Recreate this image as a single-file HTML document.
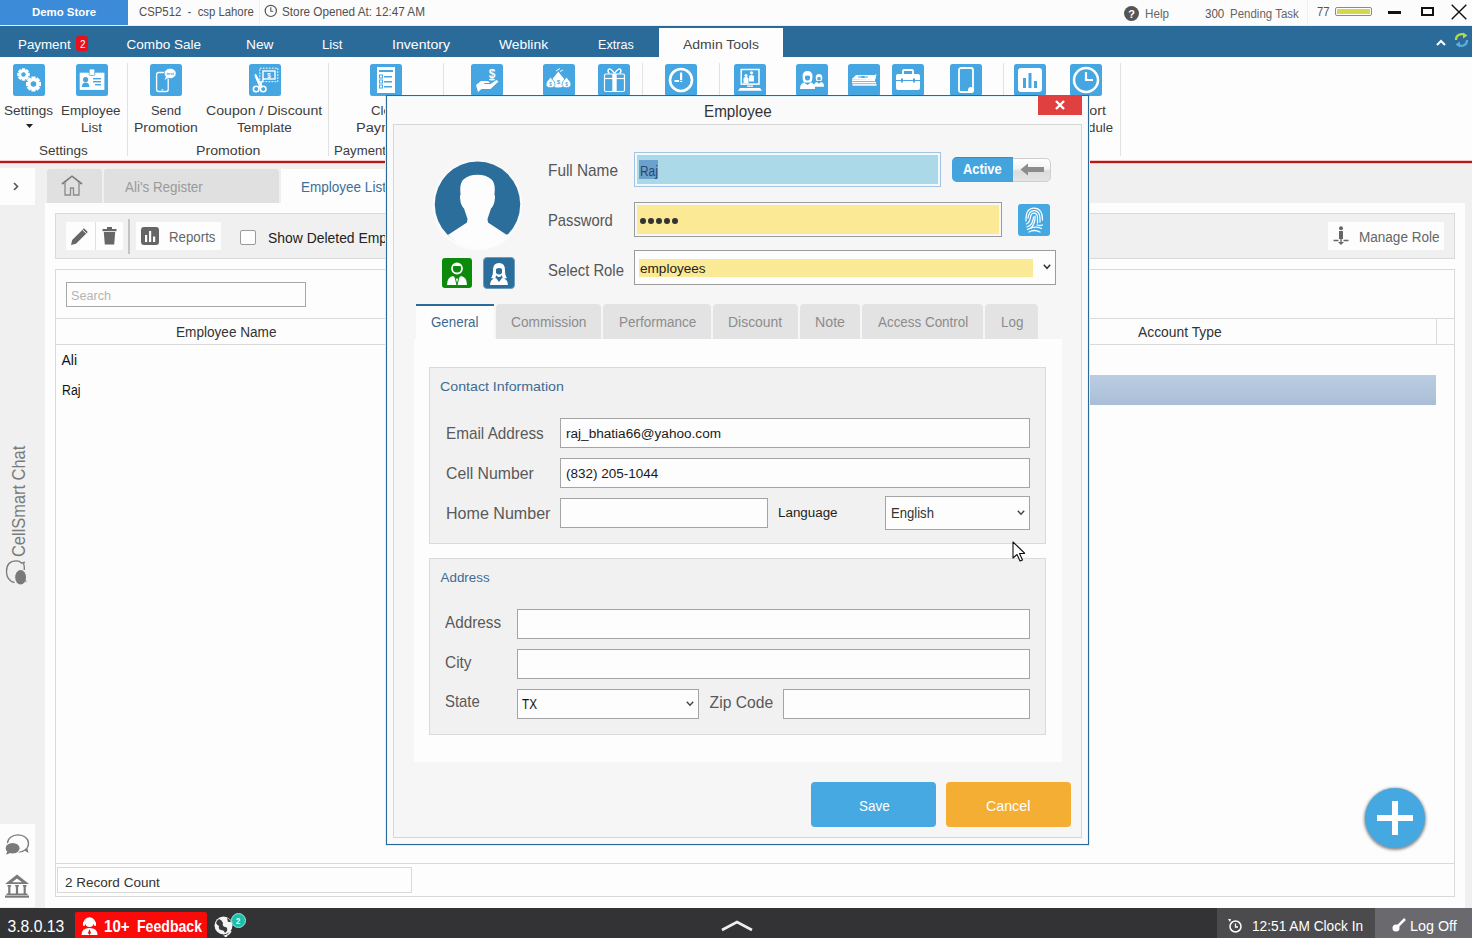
<!DOCTYPE html>
<html><head><meta charset="utf-8"><title>Employee</title>
<style>
html,body{margin:0;padding:0;}
body{width:1472px;height:938px;overflow:hidden;position:relative;background:#f0f0f0;font-family:"Liberation Sans",sans-serif;}
.r{position:absolute;box-sizing:border-box;}
.t{position:absolute;white-space:pre;line-height:1;transform-origin:0 0;font-family:"Liberation Sans",sans-serif;}
</style></head><body>
<div class="r" style="left:0px;top:0px;width:1472px;height:26px;background:#fcfcfc;"></div>
<div class="r" style="left:0px;top:0px;width:128px;height:25px;background:#3b8bd8;"></div>
<div class="t" style="left:32.20px;top:5.85px;font-size:11.63px;color:#ffffff;transform:scaleX(0.9807);font-weight:bold;">Demo Store</div>
<div class="t" style="left:139.20px;top:5.02px;font-size:13.08px;color:#505050;transform:scaleX(0.8674);">CSP512  -  csp Lahore</div>
<div class="r" style="left:259px;top:0px;width:1px;height:25px;background:#eef0f2;"></div>
<svg class="r" style="left:264px;top:4px;" width="14" height="14" viewBox="0 0 14 14"><circle cx="6.8" cy="6.9" r="5.6" fill="none" stroke="#555" stroke-width="1.2"/><path d="M6.8 3.2v4h2.4" fill="none" stroke="#555" stroke-width="1.1"/></svg>
<div class="t" style="left:282.00px;top:5.02px;font-size:13.08px;color:#505050;transform:scaleX(0.8979);">Store Opened At: 12:47 AM</div>
<svg class="r" style="left:1124px;top:6px;" width="15" height="15" viewBox="0 0 15 15"><circle cx="7.5" cy="7.5" r="7.5" fill="#555"/><text x="7.5" y="12" font-size="11" font-family="Liberation Sans" font-weight="bold" fill="#fff" text-anchor="middle">?</text></svg>
<div class="t" style="left:1144.70px;top:6.62px;font-size:13.08px;color:#666666;transform:scaleX(0.8917);">Help</div>
<div class="t" style="left:1205.00px;top:7.22px;font-size:13.08px;color:#555555;transform:scaleX(0.8848);">300</div>
<div class="t" style="left:1229.60px;top:6.62px;font-size:13.08px;color:#666666;transform:scaleX(0.8784);">Pending Task</div>
<div class="r" style="left:1307px;top:0px;width:1px;height:25px;background:#eef0f2;"></div>
<div class="t" style="left:1317.00px;top:5.62px;font-size:12.50px;color:#555555;transform:scaleX(0.8989);">77</div>
<div class="r" style="left:1335px;top:7px;width:37px;height:9px;border:1px solid #8a8a8a;border-radius:2px;background:#fff;"></div>
<div class="r" style="left:1337px;top:9px;width:33px;height:5px;background:#d4d84a;"></div>
<div class="r" style="left:1388px;top:11px;width:13px;height:3px;background:#111;"></div>
<div class="r" style="left:1421px;top:7px;width:13px;height:9px;border:2px solid #111;"></div>
<svg class="r" style="left:1451px;top:4px;" width="16" height="16" viewBox="0 0 16 16"><path d="M0.7 0.7L15.3 15.3M15.3 0.7L0.7 15.3" stroke="#111" stroke-width="1.4"/></svg>
<div class="r" style="left:0px;top:25px;width:1472px;height:1px;background:#e8eef3;"></div>
<div class="r" style="left:0px;top:26px;width:1472px;height:31px;background:#2b6b99;"></div>
<div class="t" style="left:18.30px;top:37.65px;font-size:13.52px;color:#ffffff;transform:scaleX(0.9876);">Payment</div>
<div class="r" style="left:76px;top:36px;width:12px;height:15px;background:#e8101a;border-radius:3px;"></div>
<div class="t" style="left:79.50px;top:38.77px;font-size:10.90px;color:#ffffff;transform:scaleX(0.9091);">2</div>
<div class="t" style="left:126.60px;top:37.65px;font-size:13.52px;color:#ffffff;">Combo Sale</div>
<div class="t" style="left:245.50px;top:37.65px;font-size:13.52px;color:#ffffff;transform:scaleX(1.0159);">New</div>
<div class="t" style="left:322.00px;top:37.65px;font-size:13.52px;color:#ffffff;transform:scaleX(0.9753);">List</div>
<div class="t" style="left:392.00px;top:37.65px;font-size:13.52px;color:#ffffff;transform:scaleX(1.0433);">Inventory</div>
<div class="t" style="left:499.30px;top:37.65px;font-size:13.52px;color:#ffffff;transform:scaleX(1.0261);">Weblink</div>
<div class="t" style="left:598.30px;top:37.65px;font-size:13.52px;color:#ffffff;transform:scaleX(0.9316);">Extras</div>
<div class="r" style="left:659px;top:28px;width:124px;height:29px;background:#fdfdfd;"></div>
<div class="t" style="left:683.00px;top:37.65px;font-size:13.52px;color:#454545;transform:scaleX(1.0354);">Admin Tools</div>
<svg class="r" style="left:1436px;top:39px;" width="10" height="7" viewBox="0 0 10 7"><path d="M1 6L5 2L9 6" fill="none" stroke="#fff" stroke-width="2"/></svg>
<svg class="r" style="left:1454px;top:32px;" width="15" height="16" viewBox="0 0 15 16"><path d="M2 8A5.5 5.5 0 0 1 11 3.5" fill="none" stroke="#b8d84a" stroke-width="2.2"/><path d="M9 0.5L13.5 3.5L9 6.5Z" fill="#b8d84a"/><path d="M13 8A5.5 5.5 0 0 1 4 12.5" fill="none" stroke="#5aaee0" stroke-width="2.2"/><path d="M6 9.5L1.5 12.5L6 15.5Z" fill="#5aaee0"/></svg>
<div class="r" style="left:0px;top:57px;width:1472px;height:103px;background:#fdfdfd;"></div>
<svg class="r" style="left:13px;top:64px;" width="32" height="32" viewBox="0 0 32 32"><rect x="0" y="0" width="32" height="32" rx="2.5" fill="#45a6e1"/><g transform="translate(10.5,10.5)"><rect x="-1.74" y="-6.20" width="3.47" height="12.40" fill="#fff" transform="rotate(0)"/><rect x="-1.74" y="-6.20" width="3.47" height="12.40" fill="#fff" transform="rotate(45)"/><rect x="-1.74" y="-6.20" width="3.47" height="12.40" fill="#fff" transform="rotate(90)"/><rect x="-1.74" y="-6.20" width="3.47" height="12.40" fill="#fff" transform="rotate(135)"/><circle r="4.84" fill="#fff"/><circle r="2.20" fill="#45a6e1"/></g><g transform="translate(20.5,20)"><rect x="-2.10" y="-7.50" width="4.20" height="15.00" fill="#fff" transform="rotate(0)"/><rect x="-2.10" y="-7.50" width="4.20" height="15.00" fill="#fff" transform="rotate(45)"/><rect x="-2.10" y="-7.50" width="4.20" height="15.00" fill="#fff" transform="rotate(90)"/><rect x="-2.10" y="-7.50" width="4.20" height="15.00" fill="#fff" transform="rotate(135)"/><circle r="5.85" fill="#fff"/><circle r="2.80" fill="#45a6e1"/></g></svg>
<svg class="r" style="left:76px;top:64px;" width="32" height="32" viewBox="0 0 32 32"><rect x="0" y="0" width="32" height="32" rx="2.5" fill="#45a6e1"/><rect x="3.7" y="8.7" width="24.7" height="17.2" fill="#fff"/><rect x="13.2" y="5" width="5.6" height="6.5" rx="1" fill="#fff" stroke="#45a6e1" stroke-width="0.8"/><circle cx="9.6" cy="15.5" r="2.6" fill="#45a6e1"/><path d="M5.8 23q0-4.5 3.8-4.5q3.8 0 3.8 4.5z" fill="#45a6e1"/><rect x="17" y="14" width="8" height="1.4" fill="#45a6e1"/><rect x="17" y="17" width="8" height="1.4" fill="#45a6e1"/><rect x="19" y="20" width="6" height="1.4" fill="#45a6e1"/></svg>
<svg class="r" style="left:150px;top:64px;" width="32" height="32" viewBox="0 0 32 32"><rect x="0" y="0" width="32" height="32" rx="2.5" fill="#45a6e1"/><rect x="6.6" y="8.5" width="11.6" height="19" rx="2" fill="none" stroke="#fff" stroke-width="1.3"/><rect x="7.5" y="11" width="9.8" height="13" fill="none"/><circle cx="12.4" cy="25.8" r="0.8" fill="#fff"/><ellipse cx="20.2" cy="9.4" rx="6" ry="5.2" fill="#fff" stroke="#45a6e1" stroke-width="0.8"/><path d="M16 12.5l-1.5 3.5l4-2.5z" fill="#fff"/><text x="20.2" y="11" font-size="4.2" font-weight="bold" fill="#45a6e1" text-anchor="middle" font-family="Liberation Sans">text</text></svg>
<svg class="r" style="left:249px;top:64px;" width="32" height="32" viewBox="0 0 32 32"><rect x="0" y="0" width="32" height="32" rx="2.5" fill="#45a6e1"/><rect x="10.8" y="4.2" width="18" height="13.5" fill="none" stroke="#fff" stroke-width="1" stroke-dasharray="1.8 1.2"/><rect x="14" y="7" width="12" height="8" fill="none" stroke="#fff" stroke-width="1.4"/><text x="20" y="13.6" font-size="6.5" font-weight="bold" fill="#fff" text-anchor="middle" font-family="Liberation Sans">$</text><path d="M6.3 10.2L13.5 23.5M6.8 10.5l-0.5 1.5l5 11.5" stroke="#fff" stroke-width="1.5" fill="none"/><path d="M15 14L10 23.5" stroke="#fff" stroke-width="1.5"/><circle cx="7.2" cy="25" r="2.8" fill="none" stroke="#fff" stroke-width="1.6"/><circle cx="14.2" cy="25" r="2.8" fill="none" stroke="#fff" stroke-width="1.6"/></svg>
<svg class="r" style="left:370px;top:64px;" width="32" height="32" viewBox="0 0 32 32"><rect x="0" y="0" width="32" height="32" rx="2.5" fill="#45a6e1"/><rect x="7" y="3" width="18" height="26" fill="#fff"/><rect x="9" y="6" width="14" height="2" fill="#45a6e1"/><rect x="9.5" y="11" width="3" height="3" fill="none" stroke="#45a6e1" stroke-width="1"/><rect x="14" y="12" width="8" height="1.5" fill="#45a6e1"/><rect x="9.5" y="16" width="3" height="3" fill="none" stroke="#45a6e1" stroke-width="1"/><rect x="14" y="17" width="8" height="1.5" fill="#45a6e1"/><rect x="9.5" y="21" width="3" height="3" fill="none" stroke="#45a6e1" stroke-width="1"/><rect x="14" y="22" width="8" height="1.5" fill="#45a6e1"/></svg>
<svg class="r" style="left:471px;top:64px;" width="32" height="32" viewBox="0 0 32 32"><rect x="0" y="0" width="32" height="32" rx="2.5" fill="#45a6e1"/><text x="21" y="14" font-size="12" font-weight="bold" fill="#fff" text-anchor="middle" font-family="Liberation Sans">$</text><ellipse cx="21" cy="15.5" rx="3" ry="1" fill="#fff"/><path d="M5 21l5-4h7l2 2h-6l0.5 1h6l6-4l2 1.5l-8 7.5h-9l-3.5 3z" fill="#fff"/></svg>
<svg class="r" style="left:543px;top:64px;" width="32" height="32" viewBox="0 0 32 32"><rect x="0" y="0" width="32" height="32" rx="2.5" fill="#45a6e1"/><path d="M15.3 7.5l-3 4q-4 4-4 8q0 4 7 4q7 0 7-4q0-4-4-8z" fill="#fff"/><path d="M7.5 13l-1.5 2q-3 3-3 5q0 3.7 4.5 3.7q4.5 0 4.5-3.7q0-2-3-5z" fill="#fff" stroke="#45a6e1" stroke-width="0.8"/><path d="M23.5 13l-1.5 2q-3 3-3 5q0 3.7 4.5 3.7q4.5 0 4.5-3.7q0-2-3-5z" fill="#fff" stroke="#45a6e1" stroke-width="0.8"/><text x="15.3" y="20" font-size="6" font-weight="bold" fill="#45a6e1" text-anchor="middle" font-family="Liberation Sans">$</text><text x="7.5" y="21.5" font-size="4.5" font-weight="bold" fill="#45a6e1" text-anchor="middle" font-family="Liberation Sans">$</text><text x="23.5" y="21.5" font-size="4.5" font-weight="bold" fill="#45a6e1" text-anchor="middle" font-family="Liberation Sans">$</text><path d="M13 7l4-2.5M17 7.5l3-1.5" stroke="#fff" stroke-width="1"/></svg>
<svg class="r" style="left:598px;top:64px;" width="32" height="32" viewBox="0 0 32 32"><rect x="0" y="0" width="32" height="32" rx="2.5" fill="#45a6e1"/><rect x="6.5" y="10" width="20" height="17.5" rx="1.5" fill="none" stroke="#fff" stroke-width="1.2"/><path d="M6.5 14.5h20" stroke="#fff" stroke-width="1.2"/><rect x="14.3" y="10" width="4.4" height="17.5" fill="#fff"/><path d="M16.5 9.5q-4-6-6-4q-1.5 2 1 4M16.5 9.5q4-6 6-4q1.5 2-1 4" fill="none" stroke="#fff" stroke-width="1.3"/></svg>
<svg class="r" style="left:665px;top:64px;" width="32" height="32" viewBox="0 0 32 32"><rect x="0" y="0" width="32" height="32" rx="2.5" fill="#45a6e1"/><circle cx="16" cy="16" r="11" fill="none" stroke="#fff" stroke-width="2.6"/><rect x="15" y="8.5" width="2.2" height="7.5" fill="#fff"/><rect x="15" y="16.8" width="2.2" height="1.2" fill="#fff"/><rect x="9.5" y="16" width="4.6" height="2" fill="#fff"/></svg>
<svg class="r" style="left:734px;top:64px;" width="32" height="32" viewBox="0 0 32 32"><rect x="0" y="0" width="32" height="32" rx="2.5" fill="#45a6e1"/><rect x="7.2" y="5.5" width="17.8" height="14.6" fill="none" stroke="#fff" stroke-width="1.5"/><circle cx="12" cy="11.5" r="1.6" fill="#fff"/><path d="M9.5 19.5v-5q0-1.5 2.5-1.5q2.5 0 2.5 1.5v5z" fill="#fff"/><circle cx="17.5" cy="8.8" r="1.6" fill="#fff"/><path d="M15 17.5v-5q0-1.5 2.5-1.5q2.5 0 2.5 1.5v5z" fill="#fff"/><rect x="13" y="21.5" width="6" height="1.3" fill="#fff"/><path d="M6 24h20l2 2.7H4z" fill="#fff"/></svg>
<svg class="r" style="left:796px;top:64px;" width="32" height="32" viewBox="0 0 32 32"><rect x="0" y="0" width="32" height="32" rx="2.5" fill="#45a6e1"/><path d="M11.5 6.9q-5 0-5 5.5q0 4 1.5 6h7q1.5-2 1.5-6q0-5.5-5-5.5z" fill="#fff"/><path d="M9 12q2.5-1 5 0v3q-2.5 3-5 0z" fill="#45a6e1"/><path d="M4 24.9q0-5.5 4-6.5l3.5 2.5l3.5-2.5q4 1 4 6.5z" fill="#fff"/><path d="M23 10q-3.3 0-3.3 3.5q0 2 1 3.5h4.6q1-1.5 1-3.5q0-3.5-3.3-3.5z" fill="#fff"/><path d="M21.3 13.5q1.7-0.8 3.4 0v2q-1.7 2-3.4 0z" fill="#45a6e1"/><path d="M17.9 22.8q0-4 3-4.8l2.1 1.8l2.1-1.8q3 0.8 3 4.8z" fill="#fff"/></svg>
<svg class="r" style="left:848px;top:64px;" width="32" height="32" viewBox="0 0 32 32"><rect x="0" y="0" width="32" height="32" rx="2.5" fill="#45a6e1"/><path d="M4 15l4-4h20l-1 5z" fill="#fff"/><path d="M4 15h23l1-5" fill="none" stroke="#fff" stroke-width="0.8"/><rect x="4" y="15.5" width="23" height="1.6" fill="#fff"/><rect x="4" y="17.8" width="24" height="1.6" fill="#fff"/><rect x="4.5" y="20.1" width="24" height="1.6" fill="#fff"/><path d="M10 13h10" stroke="#45a6e1" stroke-width="1"/><ellipse cx="15" cy="13" rx="2" ry="1" fill="#45a6e1"/></svg>
<svg class="r" style="left:892px;top:64px;" width="32" height="32" viewBox="0 0 32 32"><rect x="0" y="0" width="32" height="32" rx="2.5" fill="#45a6e1"/><rect x="4" y="10" width="24" height="16" rx="2" fill="#fff"/><rect x="11" y="6" width="10" height="5" rx="1" fill="none" stroke="#fff" stroke-width="1.8"/><rect x="4" y="16" width="24" height="1" fill="#45a6e1"/><rect x="9" y="14.5" width="2" height="4" fill="#45a6e1"/><rect x="21" y="14.5" width="2" height="4" fill="#45a6e1"/></svg>
<svg class="r" style="left:950px;top:64px;" width="32" height="32" viewBox="0 0 32 32"><rect x="0" y="0" width="32" height="32" rx="2.5" fill="#45a6e1"/><rect x="9" y="4" width="14" height="24" rx="2" fill="none" stroke="#fff" stroke-width="1.8"/><circle cx="21" cy="26" r="3" fill="#fff"/></svg>
<svg class="r" style="left:1014px;top:64px;" width="32" height="32" viewBox="0 0 32 32"><rect x="0" y="0" width="32" height="32" rx="2.5" fill="#45a6e1"/><rect x="4" y="4" width="24" height="24" rx="3" fill="#fff"/><rect x="9" y="14" width="3" height="10" fill="#45a6e1"/><rect x="14.5" y="9" width="3" height="15" fill="#45a6e1"/><rect x="20" y="17" width="3" height="7" fill="#45a6e1"/></svg>
<svg class="r" style="left:1070px;top:64px;" width="32" height="32" viewBox="0 0 32 32"><rect x="0" y="0" width="32" height="32" rx="2.5" fill="#45a6e1"/><circle cx="16" cy="16" r="12" fill="none" stroke="#fff" stroke-width="2.5"/><path d="M16 8v8h7" fill="none" stroke="#fff" stroke-width="2.2"/></svg>
<div class="r" style="left:127px;top:63px;width:1px;height:93px;background:#e2e2e2;"></div>
<div class="r" style="left:328px;top:63px;width:1px;height:93px;background:#e2e2e2;"></div>
<div class="r" style="left:443px;top:63px;width:1px;height:93px;background:#e2e2e2;"></div>
<div class="r" style="left:642px;top:63px;width:1px;height:93px;background:#e2e2e2;"></div>
<div class="r" style="left:719px;top:63px;width:1px;height:93px;background:#e2e2e2;"></div>
<div class="r" style="left:1003px;top:63px;width:1px;height:93px;background:#e2e2e2;"></div>
<div class="r" style="left:1120px;top:63px;width:1px;height:93px;background:#e2e2e2;"></div>
<div class="t" style="left:4.30px;top:103.73px;font-size:13.66px;color:#3c3c3c;transform:scaleX(0.9928);">Settings</div>
<svg class="r" style="left:26px;top:124px;" width="7" height="4" viewBox="0 0 7 4"><path d="M0 0h7l-3.5 4z" fill="#222"/></svg>
<div class="t" style="left:61.40px;top:103.73px;font-size:13.66px;color:#3c3c3c;transform:scaleX(0.9808);">Employee</div>
<div class="t" style="left:80.50px;top:120.73px;font-size:13.66px;color:#3c3c3c;transform:scaleX(0.9884);">List</div>
<div class="t" style="left:150.50px;top:103.73px;font-size:13.66px;color:#3c3c3c;transform:scaleX(0.9466);">Send</div>
<div class="t" style="left:133.80px;top:120.73px;font-size:13.66px;color:#3c3c3c;transform:scaleX(1.0262);">Promotion</div>
<div class="t" style="left:205.70px;top:103.73px;font-size:13.66px;color:#3c3c3c;transform:scaleX(1.0346);">Coupon / Discount</div>
<div class="t" style="left:236.80px;top:120.73px;font-size:13.66px;color:#3c3c3c;transform:scaleX(0.9885);">Template</div>
<div class="t" style="left:370.50px;top:103.73px;font-size:13.66px;color:#3c3c3c;transform:scaleX(0.9647);">Clear</div>
<div class="t" style="left:356.40px;top:120.73px;font-size:13.66px;color:#3c3c3c;transform:scaleX(1.0680);">Payment</div>
<div class="t" style="left:1063.00px;top:103.73px;font-size:13.66px;color:#3c3c3c;transform:scaleX(1.0482);">Report</div>
<div class="t" style="left:1058.00px;top:120.73px;font-size:13.66px;color:#3c3c3c;transform:scaleX(0.9654);">Schedule</div>
<div class="t" style="left:38.70px;top:143.83px;font-size:13.66px;color:#3c3c3c;transform:scaleX(0.9907);">Settings</div>
<div class="t" style="left:196.00px;top:143.83px;font-size:13.66px;color:#3c3c3c;transform:scaleX(1.0358);">Promotion</div>
<div class="t" style="left:334.00px;top:143.83px;font-size:13.66px;color:#3c3c3c;transform:scaleX(0.9641);">Payment</div>
<div class="r" style="left:0px;top:160px;width:1472px;height:4px;background:#f3c9c9;"></div>
<div class="r" style="left:0px;top:161px;width:1472px;height:2px;background:#b91616;"></div>
<div class="r" style="left:0px;top:168px;width:35px;height:37px;background:#fdfdfd;"></div>
<svg class="r" style="left:13px;top:182px;" width="6" height="9" viewBox="0 0 6 9"><path d="M1 1l3.5 3.5L1 8" fill="none" stroke="#555" stroke-width="1.6"/></svg>
<div class="t" style="left:9.5px;top:557px;font-size:18.8px;color:#7a7a7a;transform:rotate(-90deg) scaleX(0.874);transform-origin:0 0;">CellSmart Chat</div>
<svg class="r" style="left:4px;top:558px;" width="26" height="30" viewBox="0 0 26 30"><path d="M21 4.2L17.8 5.2Q15.5 2.9 12.5 2.9Q2.5 2.9 2.5 13.5Q2.5 22.5 10.5 24.5" fill="none" stroke="#7a7a7a" stroke-width="1.3"/><path d="M19.6 5.2Q20.5 9 20.3 12" fill="none" stroke="#7a7a7a" stroke-width="1.3"/><ellipse cx="16.6" cy="19.3" rx="5.4" ry="7.2" fill="#7a7a7a"/><path d="M20 22.5l3 2l-2.5-4.5z" fill="#7a7a7a"/></svg>
<div class="r" style="left:0px;top:824px;width:35px;height:83px;background:#fdfdfd;"></div>
<svg class="r" style="left:4px;top:832px;" width="27" height="25" viewBox="0 0 27 25"><ellipse cx="14" cy="11.5" rx="10.5" ry="8.7" fill="none" stroke="#7a7a7a" stroke-width="1.3"/><path d="M20.5 18.5l4 2.5l-1-4.5z" fill="#7a7a7a"/><ellipse cx="8.6" cy="16.2" rx="7.6" ry="5.9" fill="#7a7a7a" stroke="#fdfdfd" stroke-width="1.2"/><path d="M3 19.5l-0.8 3.2l4.5-2z" fill="#7a7a7a"/></svg>
<svg class="r" style="left:4px;top:873px;" width="27" height="26" viewBox="0 0 27 26"><path fill-rule="evenodd" d="M13 1.5L1 11h24zM13 5.5L8 9.3h10z" fill="#7a7a7a"/><rect x="3.5" y="12" width="3.6" height="1.6" fill="#7a7a7a"/><rect x="4.2" y="12" width="2.2" height="9" fill="#7a7a7a"/><rect x="11.2" y="12" width="3.6" height="1.6" fill="#7a7a7a"/><rect x="11.9" y="12" width="2.2" height="9" fill="#7a7a7a"/><rect x="18.9" y="12" width="3.6" height="1.6" fill="#7a7a7a"/><rect x="19.6" y="12" width="2.2" height="9" fill="#7a7a7a"/><rect x="2.5" y="20.5" width="21" height="1.5" fill="#7a7a7a"/><rect x="1" y="22.5" width="24" height="2.2" fill="#7a7a7a"/></svg>
<div class="r" style="left:47px;top:169px;width:55px;height:34px;background:#e0e0e0;border-radius:3px 3px 0 0;"></div>
<svg class="r" style="left:61px;top:175px;" width="22" height="21" viewBox="0 0 22 21"><path d="M1 9L11 1.2L21 9" fill="none" stroke="#7a7a7a" stroke-width="1.6"/><path d="M4 7v13h5.5v-7h3v7H18V7" fill="none" stroke="#8a8a8a" stroke-width="1.3"/></svg>
<div class="r" style="left:104px;top:169px;width:175px;height:34px;background:#e0e0e0;border-radius:3px 3px 0 0;"></div>
<div class="t" style="left:124.50px;top:181.19px;font-size:13.95px;color:#9a9a9a;transform:scaleX(0.9617);">Ali&#x27;s Register</div>
<div class="r" style="left:281px;top:169px;width:139px;height:34px;background:#fdfdfd;"></div>
<div class="t" style="left:301.00px;top:181.19px;font-size:13.95px;color:#3f6f96;transform:scaleX(0.9700);">Employee List</div>
<div class="r" style="left:45px;top:203px;width:1420px;height:705px;background:#fdfdfd;"></div>
<div class="r" style="left:55px;top:213px;width:1400px;height:46px;background:#f0f0f0;border:1px solid #d9d9d9;"></div>
<div class="r" style="left:66px;top:222px;width:29px;height:28px;background:#fdfdfd;"></div>
<div class="r" style="left:95px;top:222px;width:28px;height:28px;background:#fdfdfd;border-left:1px solid #e0e0e0;"></div>
<svg class="r" style="left:70px;top:226px;" width="20" height="20" viewBox="0 0 20 20"><path d="M1 19l1.2-5L14 2.2l3.8 3.8L6 17.8z" fill="#666"/><path d="M12.5 3.7l3.8 3.8" stroke="#fdfdfd" stroke-width="1"/></svg>
<svg class="r" style="left:102px;top:227px;" width="15" height="18" viewBox="0 0 15 18"><rect x="0.5" y="2" width="14" height="2.2" fill="#666"/><rect x="5" y="0" width="5" height="2" fill="#666"/><path d="M1.8 5h11.4l-1 12.5H2.8z" fill="#666"/></svg>
<div class="r" style="left:128px;top:219px;width:2px;height:35px;background:#c4c4c4;"></div>
<div class="r" style="left:136px;top:222px;width:85px;height:28px;background:#fdfdfd;"></div>
<svg class="r" style="left:141px;top:227px;" width="18" height="18" viewBox="0 0 18 18"><rect x="0" y="0" width="18" height="18" rx="3" fill="#666"/><rect x="4" y="8" width="2.2" height="7" fill="#fff"/><rect x="8" y="4" width="2.2" height="11" fill="#fff"/><rect x="12" y="9.5" width="2.2" height="5.5" fill="#fff"/></svg>
<div class="t" style="left:169.00px;top:229.95px;font-size:14.83px;color:#666666;transform:scaleX(0.8955);">Reports</div>
<div class="r" style="left:240px;top:230px;width:16px;height:15px;background:#fdfdfd;border:1px solid #9a9a9a;border-radius:2px;"></div>
<div class="t" style="left:267.70px;top:229.85px;font-size:15.41px;color:#222222;transform:scaleX(0.9028);">Show Deleted Employee</div>
<div class="r" style="left:1328px;top:222px;width:116px;height:28px;background:#fdfdfd;"></div>
<svg class="r" style="left:1333px;top:226px;" width="16" height="20" viewBox="0 0 16 20"><circle cx="8" cy="2.2" r="2" fill="#666"/><rect x="6" y="5" width="4" height="8" fill="#666"/><rect x="7.3" y="12" width="1.4" height="6" fill="#666"/><path d="M0.5 14.5h5M10.5 14.5h5" stroke="#666" stroke-width="1.3"/><path d="M5 16l3 3l3-3z" fill="#666"/></svg>
<div class="t" style="left:1358.50px;top:229.95px;font-size:14.83px;color:#666666;transform:scaleX(0.9130);">Manage Role</div>
<div class="r" style="left:55px;top:269px;width:1400px;height:628px;background:#fdfdfd;border:1px solid #d9d9d9;"></div>
<div class="r" style="left:66px;top:282px;width:240px;height:25px;background:#fdfdfd;border:1px solid #a8a8a8;"></div>
<div class="t" style="left:71.30px;top:288.63px;font-size:13.66px;color:#b4b4b4;transform:scaleX(0.9266);">Search</div>
<div class="r" style="left:56px;top:318px;width:1398px;height:1px;background:#dadada;"></div>
<div class="r" style="left:56px;top:344px;width:1398px;height:1px;background:#dadada;"></div>
<div class="r" style="left:1436px;top:319px;width:1px;height:25px;background:#dadada;"></div>
<div class="t" style="left:176.40px;top:326.09px;font-size:13.95px;color:#333333;transform:scaleX(0.9753);">Employee Name</div>
<div class="t" style="left:1138.20px;top:325.69px;font-size:13.95px;color:#333333;transform:scaleX(0.9943);">Account Type</div>
<div class="t" style="left:61.50px;top:354.49px;font-size:13.95px;color:#111111;">Ali</div>
<div class="t" style="left:61.50px;top:384.29px;font-size:13.95px;color:#111111;transform:scaleX(0.8839);">Raj</div>
<div class="r" style="left:400px;top:375px;width:1036px;height:30px;background:linear-gradient(#bccde2,#a9bed6);"></div>
<div class="r" style="left:56px;top:863px;width:1398px;height:1px;background:#dadada;"></div>
<div class="r" style="left:57px;top:867px;width:355px;height:26px;background:#fdfdfd;border:1px solid #d9d9d9;"></div>
<div class="t" style="left:65.20px;top:875.72px;font-size:13.08px;color:#333333;transform:scaleX(1.0345);">2 Record Count</div>
<div class="r" style="left:1365px;top:788px;width:60px;height:60px;border-radius:50%;background:#45a8e0;box-shadow:0 1px 3px 1px rgba(0,0,0,0.45);"></div>
<div class="r" style="left:1377px;top:815px;width:36px;height:6px;background:#fff;"></div>
<div class="r" style="left:1392px;top:801px;width:6px;height:34px;background:#fff;"></div>
<div class="r" style="left:0px;top:908px;width:1472px;height:30px;background:#333336;"></div>
<div class="t" style="left:7.50px;top:919.21px;font-size:15.70px;color:#ffffff;">3.8.0.13</div>
<div class="r" style="left:75px;top:912px;width:132px;height:26px;background:#fb0a0a;border-radius:2px 2px 0 0;"></div>
<svg class="r" style="left:80px;top:915px;" width="20" height="21" viewBox="0 0 20 21"><circle cx="9.5" cy="7.5" r="4.6" fill="#fff"/><path d="M4 8.5a5.5 5.5 0 0 1 11 0" fill="none" stroke="#fff" stroke-width="1.3"/><rect x="3" y="7" width="2" height="4" rx="1" fill="#fff"/><rect x="14" y="7" width="2" height="4" rx="1" fill="#fff"/><path d="M1.5 20q0-7 8-7q8 0 8 7z" fill="#fff"/><path d="M9.5 14l-1.5 4l1.5 2l1.5-2z" fill="#fb0a0a"/></svg>
<div class="t" style="left:103.80px;top:919.31px;font-size:15.70px;color:#ffffff;transform:scaleX(0.9607);font-weight:bold;">10+</div>
<div class="t" style="left:136.50px;top:919.31px;font-size:15.70px;color:#ffffff;transform:scaleX(0.8986);font-weight:bold;">Feedback</div>
<svg class="r" style="left:213px;top:914px;" width="23" height="23" viewBox="0 0 23 23"><circle cx="10.5" cy="11.5" r="9" fill="#f4f4f4"/><path d="M6 5q3 1 4 4q-1 3 2 4q3 0 2 4l-2 2q-1-3-4-3q-3-1-2-4q-2-1-3-3q1-3 3-4z" fill="#3a3a3a"/><path d="M14 4q3 1 4 4l-3 0z" fill="#3a3a3a"/><path d="M18 17q-2 4-6 5l2 1" fill="none" stroke="#fff" stroke-width="1.3"/></svg>
<div class="r" style="left:231px;top:913px;width:15px;height:15px;border-radius:50%;background:#1dbfa6;border:1px solid #9fe3ea;"></div>
<div class="t" style="left:236.30px;top:916.62px;font-size:8.72px;color:#e8fffa;transform:scaleX(0.8677);font-weight:bold;">2</div>
<svg class="r" style="left:721px;top:920px;" width="32" height="12" viewBox="0 0 32 12"><path d="M1 10L16 2L31 10" fill="none" stroke="#eee" stroke-width="2.6"/></svg>
<div class="r" style="left:1217px;top:908px;width:158px;height:30px;background:#4b4b4e;"></div>
<svg class="r" style="left:1227px;top:918px;" width="16" height="16" viewBox="0 0 16 16"><circle cx="8.5" cy="8.5" r="5.5" fill="none" stroke="#fff" stroke-width="1.5"/><path d="M8.5 5.5v3.5h2.5" fill="none" stroke="#fff" stroke-width="1.3"/><path d="M1 1l3 0l-1 3z" fill="#fff"/></svg>
<div class="t" style="left:1252.40px;top:918.82px;font-size:14.97px;color:#ffffff;transform:scaleX(0.9145);">12:51 AM Clock In</div>
<div class="r" style="left:1375px;top:908px;width:97px;height:30px;background:#6a6a6e;"></div>
<svg class="r" style="left:1392px;top:917px;" width="14" height="15" viewBox="0 0 14 15"><circle cx="4" cy="11" r="3.5" fill="#fff"/><path d="M6 9L13 2" stroke="#fff" stroke-width="2.5"/></svg>
<div class="t" style="left:1410.00px;top:918.82px;font-size:14.97px;color:#ffffff;transform:scaleX(0.9574);">Log Off</div>
<div class="r" style="left:385px;top:96px;width:1px;height:750px;background:#dcecf8;"></div>
<div class="r" style="left:1089px;top:96px;width:1px;height:750px;background:#dcecf8;"></div>
<div class="r" style="left:386px;top:845px;width:703px;height:1px;background:#d4f2fb;"></div>
<div class="r" style="left:386px;top:95px;width:703px;height:750px;background:#fafafa;border:1px solid #2a6a98;box-shadow:inset 0 0 0 1px #e2f8fc;"></div>
<div class="t" style="left:703.60px;top:103.96px;font-size:15.99px;color:#333333;transform:scaleX(0.9535);">Employee</div>
<div class="r" style="left:1038px;top:95px;width:44px;height:20px;background:#e0403f;"></div>
<svg class="r" style="left:1054px;top:99px;" width="12" height="12" viewBox="0 0 12 12"><path d="M2 2L10 10M10 2L2 10" stroke="#fff" stroke-width="2.4"/></svg>
<div class="r" style="left:393px;top:124px;width:689px;height:714px;background:#f6f6f7;border:1px solid #d6d6d6;"></div>
<svg class="r" style="left:432px;top:159px;" width="92" height="94" viewBox="0 0 92 94"><defs><clipPath id="cc"><circle cx="45.5" cy="45.3" r="42.7"/></clipPath></defs><circle cx="45.5" cy="46.5" r="45" fill="#fbfbfb"/><circle cx="45.5" cy="45.3" r="42.7" fill="#2b6e9c"/><g clip-path="url(#cc)" transform="translate(2,2)"><path d="M33.5 58L30 47.5Q26.5 44 26.2 38Q25.5 35.5 26.6 33.5Q25 22 30 18Q35 13.7 43.5 13.7Q52 13.7 57 18Q62 22 60.4 33.5Q61.5 35.5 60.8 38Q60.5 44 57 47.5L53.5 58L54 61.5L72.2 73.4L100 73.4L100 100L-10 100L-10 73.4L14.7 73.4L33 61.5Z" fill="#fdfdfd"/></g></svg>
<div class="r" style="left:442px;top:258px;width:30px;height:30px;background:#0b8a0b;border-radius:3px;"></div>
<svg class="r" style="left:446px;top:261px;" width="22" height="25" viewBox="0 0 22 25"><circle cx="11" cy="7.5" r="5" fill="none" stroke="#fff" stroke-width="1.8"/><path d="M6 5q5-5 10 0" fill="#fff"/><path d="M1 24q0-8 6-9l4 3l4-3q6 1 6 9z" fill="#fff"/><path d="M9 16l2 8l2-8" fill="none" stroke="#0b8a0b" stroke-width="1"/></svg>
<div class="r" style="left:483px;top:257px;width:32px;height:32px;background:#2b6e9c;border-radius:4px;border:1px solid #6d9cc0;"></div>
<svg class="r" style="left:488px;top:261px;" width="22" height="25" viewBox="0 0 22 25"><path d="M11 2q-6 0-6 7q0 6-2 8l4 1q1-2 1-4q1 2 3 2q2 0 3-2q0 2 1 4l4-1q-2-2-2-8q0-7-6-7z" fill="#fff"/><path d="M8 8q3-2 6 0v4q-3 3-6 0z" fill="#2b6e9c"/><path d="M2 24q0-6 6-7l3 4l3-4q6 1 6 7z" fill="#fff"/></svg>
<div class="t" style="left:547.50px;top:162.91px;font-size:15.70px;color:#555555;transform:scaleX(0.9784);">Full Name</div>
<div class="t" style="left:547.50px;top:212.91px;font-size:15.70px;color:#555555;transform:scaleX(0.9403);">Password</div>
<div class="t" style="left:547.50px;top:262.51px;font-size:15.70px;color:#555555;transform:scaleX(0.9465);">Select Role</div>
<div class="r" style="left:634px;top:152px;width:307px;height:35px;background:#abd9e7;border:1px solid #9fc4e4;box-shadow:inset 0 0 0 2px #f4f8fb;"></div>
<div class="r" style="left:639px;top:160px;width:19px;height:19px;background:#6aa1cd;"></div>
<div class="t" style="left:639.60px;top:164.19px;font-size:14.53px;color:#2b4a70;transform:scaleX(0.8210);">Raj</div>
<div class="r" style="left:952px;top:158px;width:99px;height:24px;background:linear-gradient(#ffffff 0%,#f3f3f3 45%,#dcdcdc 55%,#e4e4e4 100%);border:1px solid #cfcfcf;border-radius:5px;"></div>
<div class="r" style="left:952px;top:157px;width:61px;height:25px;background:#43a4de;border-radius:5px 0 0 5px;border-top:1px solid #3a8cc4;"></div>
<div class="t" style="left:962.80px;top:161.84px;font-size:14.24px;color:#ffffff;transform:scaleX(0.9049);font-weight:bold;">Active</div>
<svg class="r" style="left:1020px;top:163px;" width="25" height="13" viewBox="0 0 25 13"><path d="M0.5 6.5L8 0.5v3.5h16v5H8v3.5z" fill="#8c8c8c"/></svg>
<div class="r" style="left:634px;top:202px;width:368px;height:35px;background:#fbe996;border:1px solid #9c9c9c;box-shadow:inset 0 0 0 2px #f7f7f7;"></div>
<div class="r" style="left:640.2px;top:217.8px;width:5.8px;height:5.8px;border-radius:50%;background:#333;"></div>
<div class="r" style="left:648.1px;top:217.8px;width:5.8px;height:5.8px;border-radius:50%;background:#333;"></div>
<div class="r" style="left:656.0px;top:217.8px;width:5.8px;height:5.8px;border-radius:50%;background:#333;"></div>
<div class="r" style="left:663.9px;top:217.8px;width:5.8px;height:5.8px;border-radius:50%;background:#333;"></div>
<div class="r" style="left:671.8px;top:217.8px;width:5.8px;height:5.8px;border-radius:50%;background:#333;"></div>
<div class="r" style="left:1018px;top:204px;width:32px;height:32px;background:#45a8e1;border-radius:3px;"></div>
<svg class="r" style="left:1021px;top:206px;" width="26" height="28" viewBox="0 0 26 28"><g fill="none" stroke="#fff" stroke-width="1.25" stroke-linecap="round"><path d="M5 15Q4.5 2 13 2Q21.5 2 21.5 14"/><path d="M7 12Q8 4.5 13 4.5Q19 4.5 19 13v3"/><path d="M5.5 18Q9 16 9.5 11Q10 7 13 7Q16.5 7 16.5 12v5"/><path d="M6 21Q12 19 12.5 11"/><path d="M14 10q0.5 7 -4 12"/><path d="M16 19q3 1 5.5 0"/><path d="M6.5 23.5q7 -4 14 -1"/><path d="M8 26q5 -3 11 0"/></g></svg>
<div class="r" style="left:634px;top:250px;width:422px;height:35px;background:#fdfdfd;border:1px solid #9c9c9c;"></div>
<div class="r" style="left:639px;top:259px;width:394px;height:18px;background:#fae995;"></div>
<div class="t" style="left:639.50px;top:263.16px;font-size:12.21px;color:#222222;transform:scaleX(1.1113);">employees</div>
<svg class="r" style="left:1043px;top:264px;" width="8" height="6" viewBox="0 0 8 6"><path d="M0.8 0.8l3.2 3.5l3.2-3.5" fill="none" stroke="#333" stroke-width="1.5"/></svg>
<div class="r" style="left:414px;top:339px;width:648px;height:423px;background:#fdfdfd;"></div>
<div class="r" style="left:416px;top:304px;width:78px;height:35px;background:#fdfdfd;border-top:2px solid #2b6b99;"></div>
<div class="t" style="left:431.00px;top:315.69px;font-size:13.95px;color:#3b6a92;transform:scaleX(0.9569);">General</div>
<div class="r" style="left:496px;top:304px;width:105px;height:35px;background:#e3e3e3;border-radius:4px 4px 0 0;"></div>
<div class="t" style="left:510.80px;top:315.69px;font-size:13.95px;color:#8c8c8c;transform:scaleX(0.9838);">Commission</div>
<div class="r" style="left:603px;top:304px;width:108px;height:35px;background:#e3e3e3;border-radius:4px 4px 0 0;"></div>
<div class="t" style="left:618.70px;top:315.69px;font-size:13.95px;color:#8c8c8c;transform:scaleX(0.9677);">Performance</div>
<div class="r" style="left:713px;top:304px;width:85px;height:35px;background:#e3e3e3;border-radius:4px 4px 0 0;"></div>
<div class="t" style="left:728.00px;top:315.69px;font-size:13.95px;color:#8c8c8c;">Discount</div>
<div class="r" style="left:800px;top:304px;width:60px;height:35px;background:#e3e3e3;border-radius:4px 4px 0 0;"></div>
<div class="t" style="left:815.00px;top:315.69px;font-size:13.95px;color:#8c8c8c;transform:scaleX(1.0178);">Note</div>
<div class="r" style="left:862px;top:304px;width:121px;height:35px;background:#e3e3e3;border-radius:4px 4px 0 0;"></div>
<div class="t" style="left:877.90px;top:315.69px;font-size:13.95px;color:#8c8c8c;transform:scaleX(0.9623);">Access Control</div>
<div class="r" style="left:985px;top:304px;width:53px;height:35px;background:#e3e3e3;border-radius:4px 4px 0 0;"></div>
<div class="t" style="left:1000.60px;top:315.69px;font-size:13.95px;color:#8c8c8c;transform:scaleX(0.9627);">Log</div>
<div class="r" style="left:429px;top:367px;width:617px;height:177px;background:#f1f1f1;border:1px solid #dadada;"></div>
<div class="t" style="left:440.00px;top:379.58px;font-size:13.37px;color:#3d6b94;transform:scaleX(1.0625);">Contact Information</div>
<div class="t" style="left:445.50px;top:426.21px;font-size:15.70px;color:#595959;transform:scaleX(0.9746);">Email Address</div>
<div class="r" style="left:560px;top:418px;width:470px;height:30px;background:#fdfdfd;border:1px solid #a4a4a4;"></div>
<div class="t" style="left:565.80px;top:427.23px;font-size:13.66px;color:#1a1a1a;transform:scaleX(0.9947);">raj_bhatia66@yahoo.com</div>
<div class="t" style="left:445.50px;top:465.81px;font-size:15.70px;color:#595959;transform:scaleX(1.0076);">Cell Number</div>
<div class="r" style="left:560px;top:458px;width:470px;height:30px;background:#fdfdfd;border:1px solid #a4a4a4;"></div>
<div class="t" style="left:565.80px;top:467.23px;font-size:13.66px;color:#1a1a1a;transform:scaleX(0.9869);">(832) 205-1044</div>
<div class="t" style="left:445.50px;top:505.81px;font-size:15.70px;color:#595959;transform:scaleX(1.0238);">Home Number</div>
<div class="r" style="left:560px;top:498px;width:208px;height:30px;background:#fdfdfd;border:1px solid #a4a4a4;"></div>
<div class="t" style="left:778.40px;top:505.53px;font-size:13.66px;color:#222222;transform:scaleX(0.9803);">Language</div>
<div class="r" style="left:885px;top:496px;width:145px;height:34px;background:#fdfdfd;border:1px solid #a4a4a4;"></div>
<div class="t" style="left:891.00px;top:506.69px;font-size:13.95px;color:#333333;transform:scaleX(0.9395);">English</div>
<svg class="r" style="left:1017px;top:510px;" width="8" height="6" viewBox="0 0 8 6"><path d="M0.8 0.8l3.2 3.5l3.2-3.5" fill="none" stroke="#444" stroke-width="1.4"/></svg>
<div class="r" style="left:429px;top:558px;width:617px;height:177px;background:#f1f1f1;border:1px solid #dadada;"></div>
<div class="t" style="left:440.60px;top:570.78px;font-size:13.37px;color:#3d6b94;">Address</div>
<div class="t" style="left:445.20px;top:615.21px;font-size:15.70px;color:#595959;transform:scaleX(0.9744);">Address</div>
<div class="r" style="left:517px;top:609px;width:513px;height:30px;background:#fdfdfd;border:1px solid #a4a4a4;"></div>
<div class="t" style="left:445.20px;top:655.31px;font-size:15.70px;color:#595959;transform:scaleX(0.9838);">City</div>
<div class="r" style="left:517px;top:649px;width:513px;height:30px;background:#fdfdfd;border:1px solid #a4a4a4;"></div>
<div class="t" style="left:445.20px;top:694.21px;font-size:15.70px;color:#595959;transform:scaleX(0.9494);">State</div>
<div class="r" style="left:517px;top:689px;width:182px;height:30px;background:#fdfdfd;border:1px solid #a4a4a4;"></div>
<div class="t" style="left:522.30px;top:697.44px;font-size:14.24px;color:#111111;transform:scaleX(0.8243);">TX</div>
<svg class="r" style="left:686px;top:701px;" width="8" height="6" viewBox="0 0 8 6"><path d="M0.8 0.8l3.2 3.5l3.2-3.5" fill="none" stroke="#444" stroke-width="1.4"/></svg>
<div class="t" style="left:709.60px;top:694.91px;font-size:15.70px;color:#595959;">Zip Code</div>
<div class="r" style="left:783px;top:689px;width:247px;height:30px;background:#fdfdfd;border:1px solid #a4a4a4;"></div>
<div class="r" style="left:811px;top:782px;width:125px;height:45px;background:#46a9e1;border-radius:4px;"></div>
<div class="t" style="left:858.50px;top:798.45px;font-size:15.41px;color:#ffffff;transform:scaleX(0.8739);">Save</div>
<div class="r" style="left:946px;top:782px;width:125px;height:45px;background:#f5ae34;border-radius:4px;"></div>
<div class="t" style="left:986.20px;top:798.45px;font-size:15.41px;color:#ffffff;transform:scaleX(0.9238);">Cancel</div>
<svg class="r" style="left:1012px;top:541px;" width="13" height="21" viewBox="0 0 13 21"><path d="M1 1v16l4-3.5l3 6.5l2.5-1l-3-6.5h5.5z" fill="#fff" stroke="#111" stroke-width="1.1" stroke-linejoin="round"/></svg>
</body></html>
